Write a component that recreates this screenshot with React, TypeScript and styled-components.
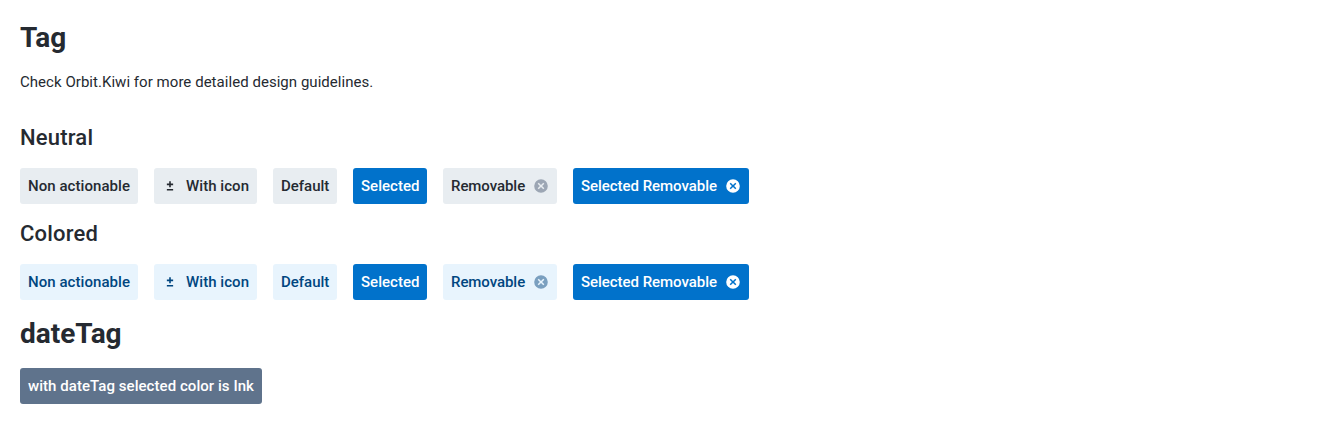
import React from "react";
import styled, { createGlobalStyle } from "styled-components";

const Global = createGlobalStyle`
  body { margin: 0; background: #fff; }
  *, *::before, *::after { box-sizing: border-box; }
`;

const Page = styled.main`
  padding: 20px;
  display: flex;
  flex-direction: column;
  font-family: Roboto, sans-serif;
  color: #252a31;
`;
const Title = styled.h1`
  margin: 0;
  font-size: 28px;
  line-height: 36px;
  font-weight: 700;
`;
const Subtitle = styled.h2`
  margin: 0 0 16px;
  font-size: 22px;
  line-height: 28px;
  font-weight: 500;
  letter-spacing: 0.2px;
`;
const Intro = styled.p`
  margin: 16px 0 32px;
  font-size: 15px;
  line-height: 20px;
  letter-spacing: 0.04px;
`;
const Row = styled.div<{ $top?: number }>`
  display: flex;
  gap: 16px;
  margin-top: ${(p) => p.$top ?? 0}px;
  margin-bottom: 16px;
`;

type Tone = "neutral" | "colored" | "selected" | "date";
const tones: Record<Tone, { bg: string; fg: string; close: string }> = {
  neutral: { bg: "#e8edf1", fg: "#252a31", close: "#9ca6b4" },
  colored: { bg: "#e8f4fd", fg: "#004680", close: "#7a9fbf" },
  selected: { bg: "#0172cb", fg: "#ffffff", close: "#ffffff" },
  date: { bg: "#5f738c", fg: "#ffffff", close: "#ffffff" },
};

const TagBox = styled.div<{ $tone: Tone; $width: number; $tracking: number }>`
  display: flex;
  align-items: center;
  gap: 8px;
  width: ${(p) => p.$width}px;
  height: 36px;
  padding: 8px;
  border-radius: 3px;
  font-size: 15px;
  line-height: 20px;
  font-weight: 500;
  letter-spacing: ${(p) => p.$tracking}px;
  white-space: nowrap;
  background: ${(p) => tones[p.$tone].bg};
  color: ${(p) => tones[p.$tone].fg};
`;
const Label = styled.span`
  flex: 1;
  min-width: 0;
`;
const Slot = styled.span<{ $tone?: Tone }>`
  display: flex;
  flex: none;
  color: ${(p) => (p.$tone ? tones[p.$tone].close : "inherit")};
`;

const PlusMinus = () => (
  <svg width="16" height="16" viewBox="0 0 24 24" fill="currentColor">
    <path d="M10.8 5h2.4v3.3h3.5v2.4h-3.5v3h-2.4v-3H7.3V8.3h3.5zM7.3 16.5h9.4v2.2H7.3z" />
  </svg>
);
const CloseCircle = () => (
  <svg width="16" height="16" viewBox="0 0 24 24" fill="currentColor">
    <path d="M12 1.8a10.2 10.2 0 1 0 0 20.4 10.2 10.2 0 0 0 0-20.4zm5 13.6L15.4 17 12 13.6 8.6 17 7 15.4 10.4 12 7 8.6 8.6 7 12 10.4 15.4 7 17 8.6 13.6 12z" />
  </svg>
);

interface TagProps {
  tone: Tone;
  width: number;
  tracking?: number;
  icon?: boolean;
  removable?: boolean;
  children: React.ReactNode;
}
const Tag = ({ tone, width, tracking = 0, icon, removable, children }: TagProps) => (
  <TagBox $tone={tone} $width={width} $tracking={tracking}>
    {icon && <Slot><PlusMinus /></Slot>}
    <Label>{children}</Label>
    {removable && <Slot $tone={tone}><CloseCircle /></Slot>}
  </TagBox>
);

const TagRow = ({ tone }: { tone: Tone }) => (
  <Row>
    <Tag tone={tone} width={118} tracking={0.06}>Non actionable</Tag>
    <Tag tone={tone} width={103} tracking={0.05} icon>With icon</Tag>
    <Tag tone={tone} width={64}>Default</Tag>
    <Tag tone="selected" width={74} tracking={0.03}>Selected</Tag>
    <Tag tone={tone} width={114} tracking={-0.06} removable>Removable</Tag>
    <Tag tone="selected" width={176} tracking={-0.04} removable>Selected Removable</Tag>
  </Row>
);

export default function App() {
  return (
    <Page>
      <Global />
      <Title>Tag</Title>
      <Intro>Check Orbit.Kiwi for more detailed design guidelines.</Intro>
      <Subtitle>Neutral</Subtitle>
      <TagRow tone="neutral" />
      <Subtitle>Colored</Subtitle>
      <TagRow tone="colored" />
      <Title>dateTag</Title>
      <Row $top={16}>
        <Tag tone="date" width={242} tracking={0.055}>with dateTag selected color is Ink</Tag>
      </Row>
    </Page>
  );
}
